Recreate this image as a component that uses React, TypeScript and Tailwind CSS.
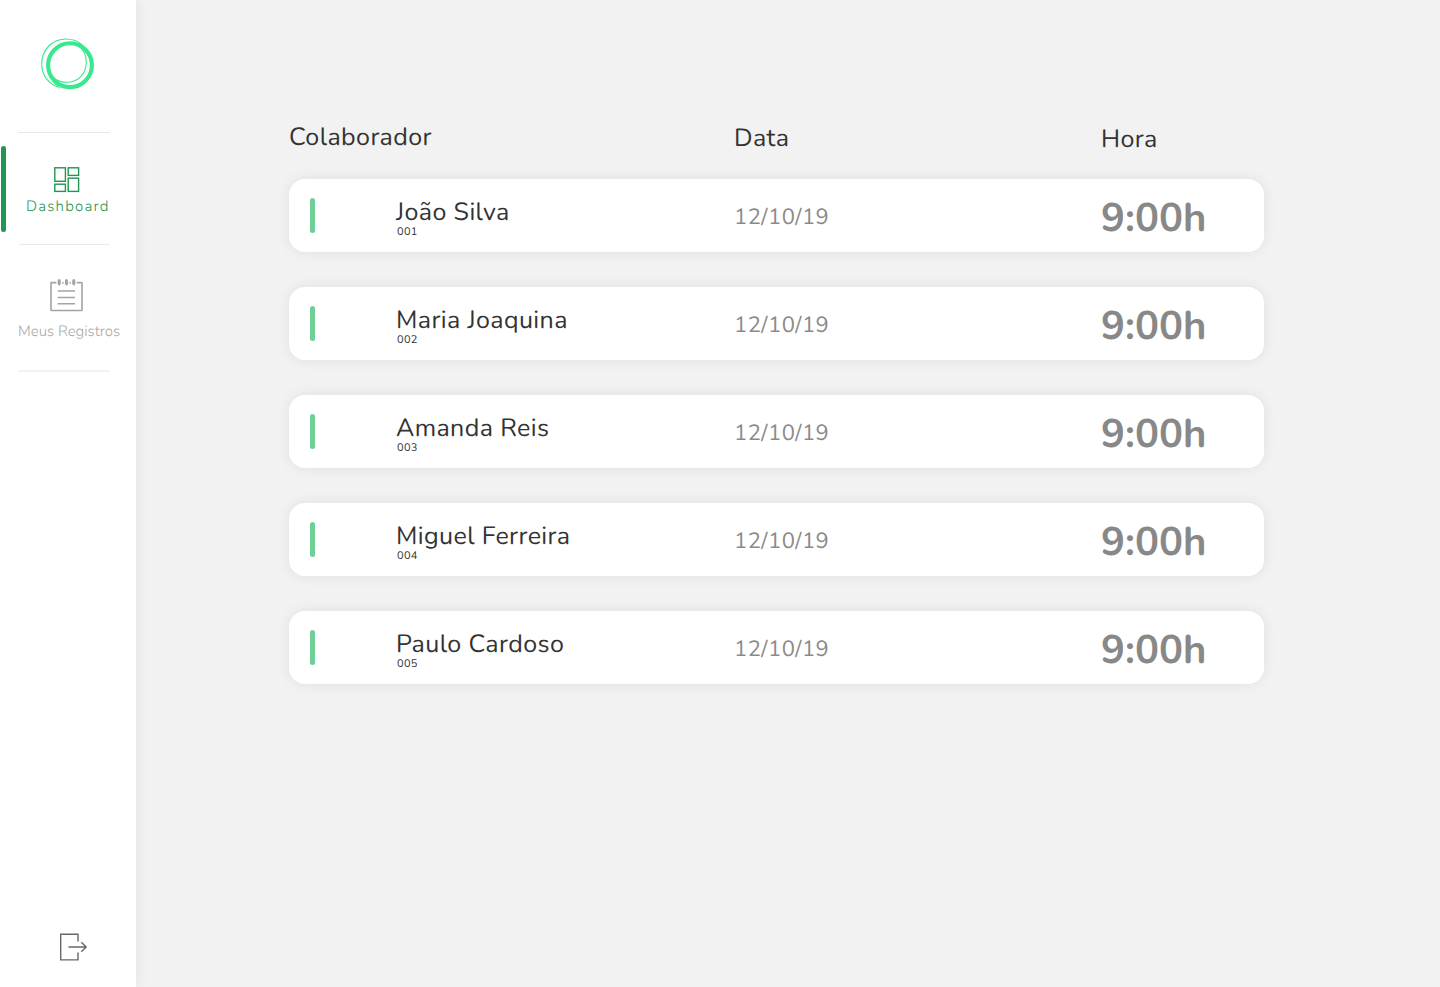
const font = "font-['Nunito','Lato',sans-serif] [text-rendering:geometricPrecision] antialiased";

const entries = [
  { id: '001', name: 'João Silva' },
  { id: '002', name: 'Maria Joaquina' },
  { id: '003', name: 'Amanda Reis' },
  { id: '004', name: 'Miguel Ferreira' },
  { id: '005', name: 'Paulo Cardoso' },
];

function Logo() {
  return (
    <svg className="ml-[38px] mt-9 block shrink-0" width="58" height="56" viewBox="38 36 58 56" fill="none" stroke="#38e88f">
      <path
        d="M82 45C78 41 72 39 66 39C52 39 41.7 50 41.7 64C41.7 75 48 84 60 87.5"
        strokeWidth="1.1"
      />
      <path d="M78 45.5C83 49 86.3 55 86.3 62C86.3 74 78 82.3 67 82.3C61 82.3 57 81 54 78" strokeWidth="1.1" />
      <path d="M80 44.5L84 48.5M53.5 80.5L58 85" strokeWidth="3" />
      <circle cx="70" cy="65.2" r="21.9" strokeWidth="4.1" />
    </svg>
  );
}

function DashboardIcon() {
  return (
    <svg className="block" width="26" height="26" viewBox="54 167 26 26" fill="none" stroke="#219653" strokeWidth="1.4">
      <rect x="54.8" y="167.8" width="10.6" height="13.5" />
      <rect x="68.2" y="167.8" width="10.4" height="7.6" />
      <rect x="54.8" y="184.2" width="10.6" height="7.2" />
      <rect x="68.2" y="178.2" width="10.4" height="13.2" />
    </svg>
  );
}

function RecordsIcon() {
  return (
    <svg className="block" width="34" height="34" viewBox="50 278 34 34" fill="none" stroke="#a3a3a3" strokeWidth="1.6">
      <path d="M56.3 282.6H51.5Q51 282.6 51 283.1V310Q51 310.5 51.5 310.5H81.5Q82 310.5 82 310V283.1Q82 282.6 81.5 282.6H76.8" />
      <path d="M57.7 291H75M57.7 297.5H75M57.7 303.8H75" />
      <g fill="#a3a3a3" stroke="none">
        <ellipse cx="59.2" cy="282.2" rx="1.6" ry="3.2" />
        <ellipse cx="66.5" cy="282.2" rx="1.6" ry="3.2" />
        <ellipse cx="73.8" cy="282.2" rx="1.6" ry="3.2" />
        <circle cx="62.9" cy="282.8" r="0.9" />
        <circle cx="70.2" cy="282.8" r="0.9" />
      </g>
    </svg>
  );
}

function ExitIcon() {
  return (
    <svg className="mb-6 ml-[59px] mt-auto block shrink-0" width="30" height="30" viewBox="59 933 30 30" fill="none" stroke="#686868" strokeWidth="1.4">
      <path d="M78 941.5V934.3H60.7V959.9H78V952.5" />
      <path d="M68.5 947H86M81.3 942.2L86.2 947L81.3 951.8" />
    </svg>
  );
}

function Sidebar() {
  return (
    <aside className="flex h-full w-[136px] shrink-0 flex-col bg-white shadow-[0_0_14px_rgba(0,0,0,0.08)]">
      <Logo />
      <div className="ml-[18px] mt-10 h-px w-[92px] shrink-0 bg-[#e8e8e8]" />
      <nav className="flex flex-col">
        <a className="flex h-[111px] text-[#219653]">
          <span className="ml-px mt-[13px] h-[86px] w-[5px] shrink-0 rounded-full bg-[#219653]" />
          <span className="ml-5 flex w-[84px] flex-col pt-[34px]">
            <span className="ml-7"><DashboardIcon /></span>
            <span className="mt-1 whitespace-nowrap text-[15px] font-light leading-5 tracking-[1.2px]">Dashboard</span>
          </span>
        </a>
        <span className="ml-[19px] h-px w-[91px] bg-[#e9e9e9]" />
        <a className="flex h-[125px] flex-col pl-[18px] pt-[33px] text-[#a8a8a8]">
          <span className="ml-8"><RecordsIcon /></span>
          <span className="mt-2.5 whitespace-nowrap text-[15px] font-light leading-5">Meus Registros</span>
        </a>
        <span className="ml-[18px] h-0.5 w-[92px] bg-[#f2f2f2]" />
      </nav>
      <ExitIcon />
    </aside>
  );
}

function App() {
  return (
    <div className={`flex h-[987px] w-[1440px] overflow-hidden bg-[#f2f2f2] text-[#333333] ${font}`}>
      <Sidebar />
      <main className="ml-[153px] w-[975px]">
        <header className="grid h-[179px] grid-cols-[445px_367px_163px] items-start text-[25px] leading-8 tracking-[0.4px]">
          <h2 className="pt-[121px]">Colaborador</h2>
          <h2 className="pt-[122px]">Data</h2>
          <h2 className="pt-[123px]">Hora</h2>
        </header>
        <ul className="flex flex-col gap-[35px]">
          {entries.map((entry) => (
            <li
              key={entry.id}
              className="grid h-[73px] grid-cols-[107px_338px_367px_163px] rounded-2xl bg-white shadow-[0_0_14px_rgba(0,0,0,0.08)]"
            >
              <span className="ml-[21px] mt-[19px] h-[35px] w-[5px] rounded-full bg-[#6fcf97]" />
              <div className="pt-[21px]">
                <p className="whitespace-nowrap text-[25px] leading-6 tracking-[0.4px]">{entry.name}</p>
                <p className="ml-px mt-0.5 text-[11px] leading-3 tracking-[0.3px]">{entry.id}</p>
              </div>
              <p className="pt-[22px] text-[22px] leading-8 tracking-[0.45px] text-[#8a8a8a]">12/10/19</p>
              <p className="pt-[15px] text-[40px] font-bold leading-[50px] text-[#888888]">9:00h</p>
            </li>
          ))}
        </ul>
      </main>
    </div>
  );
}

export default App;
